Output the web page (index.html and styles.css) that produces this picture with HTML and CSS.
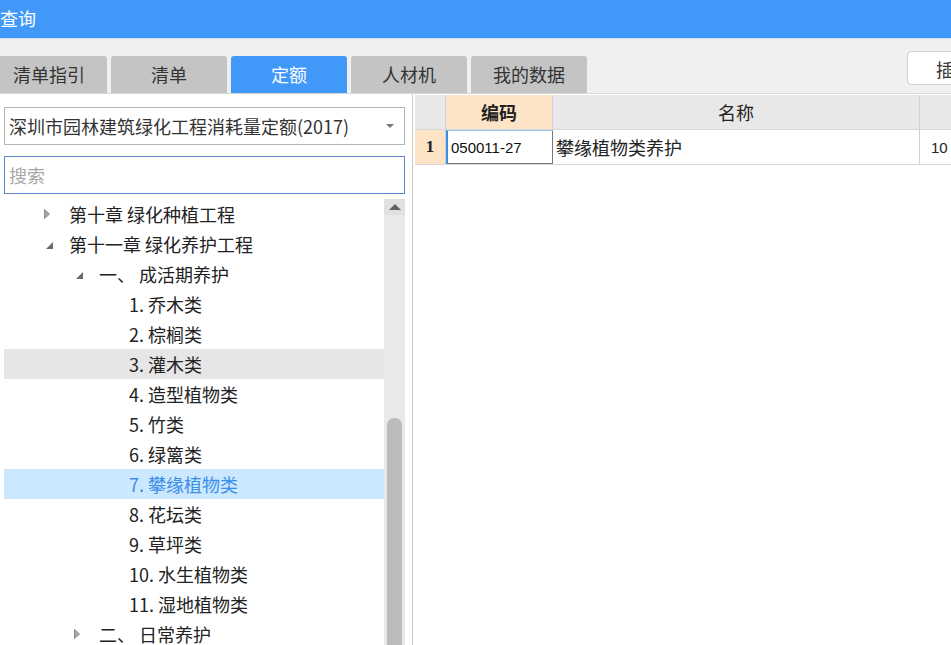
FILE: index.html
```html
<!DOCTYPE HTML>
<html>

<head>
    <meta charset="UTF-8">
    <link rel="stylesheet" href="styles.css">
</head>

<body>
    <div class="titlebar">查询</div>

    <div class="toolbar">
        <div class="tabs">
            <div class="tab first">清单指引</div>
            <div class="tab">清单</div>
            <div class="tab active">定额</div>
            <div class="tab">人材机</div>
            <div class="tab">我的数据</div>
        </div>
        <div class="tool-btn">插入</div>
    </div>

    <div class="main">
        <div class="left">
            <div class="select">
                <span>深圳市园林建筑绿化工程消耗量定额(2017)</span>
                <svg class="caret" width="8" height="5" viewBox="0 0 8 5"><polygon points="0,0 8,0 4,4" fill="#777"/></svg>
            </div>
            <div class="search">搜索</div>

            <div class="tree">
                <ul class="rows">
                    <li class="row lv0"><span class="exp"><svg width="6" height="10" viewBox="0 0 6 10"><polygon points="0.5,0.5 5.5,5 0.5,9.5" fill="#a6a6a6" stroke="#8c8c8c" stroke-width="1"/></svg></span>第十章 绿化种植工程</li>
                    <li class="row lv0"><span class="exp"><svg class="open" width="7" height="7" viewBox="0 0 7 7"><polygon points="7,0 7,7 0,7" fill="#6a6a6a"/></svg></span>第十一章 绿化养护工程</li>
                    <li class="row lv1"><span class="exp"><svg class="open" width="7" height="7" viewBox="0 0 7 7"><polygon points="7,0 7,7 0,7" fill="#6a6a6a"/></svg></span>一、 成活期养护</li>
                    <li class="row lv2"><span class="exp"></span>1. 乔木类</li>
                    <li class="row lv2"><span class="exp"></span>2. 棕榈类</li>
                    <li class="row lv2 hover"><span class="exp"></span>3. 灌木类</li>
                    <li class="row lv2"><span class="exp"></span>4. 造型植物类</li>
                    <li class="row lv2"><span class="exp"></span>5. 竹类</li>
                    <li class="row lv2"><span class="exp"></span>6. 绿篱类</li>
                    <li class="row lv2 selected"><span class="exp"></span>7. 攀缘植物类</li>
                    <li class="row lv2"><span class="exp"></span>8. 花坛类</li>
                    <li class="row lv2"><span class="exp"></span>9. 草坪类</li>
                    <li class="row lv2"><span class="exp"></span>10. 水生植物类</li>
                    <li class="row lv2"><span class="exp"></span>11. 湿地植物类</li>
                    <li class="row lv1"><span class="exp"><svg width="6" height="10" viewBox="0 0 6 10"><polygon points="0.5,0.5 5.5,5 0.5,9.5" fill="#a6a6a6" stroke="#8c8c8c" stroke-width="1"/></svg></span>二、 日常养护</li>
                </ul>
                <div class="scrollbar">
                    <div class="sb-up"><svg width="12" height="6" viewBox="0 0 12 6"><polygon points="0,6 6,0 12,6" fill="#606060"/></svg></div>
                    <div class="sb-thumb"></div>
                </div>
            </div>
        </div>

        <div class="grid">
            <div class="g-row g-head">
                <div class="cell rh"></div>
                <div class="cell code sorted">编码</div>
                <div class="cell name">名称</div>
                <div class="cell unit"></div>
            </div>
            <div class="g-row">
                <div class="cell rh num">1</div>
                <div class="cell code focus">050011-27</div>
                <div class="cell name left-text">攀缘植物类养护</div>
                <div class="cell unit left-text">10</div>
            </div>
        </div>
    </div>
</body>

</html>
```

FILE: styles.css
```css
body {
    margin: 0;
    width: 951px;
    height: 645px;
    overflow: hidden;
    background-color: #f0f0f0;
    font-family: "Noto Sans CJK SC", "Noto Sans", sans-serif;
    font-size: 18px;
    color: #222;
}

.titlebar {
    height: 38px;
    line-height: 36px;
    background-color: #4098f8;
    color: #fff;
    font-size: 18px;
    border-bottom: 1px solid #cfe2f8;
}

.toolbar {
    display: flex;
    justify-content: space-between;
    height: 54px;
    overflow: hidden;
}

.tabs {
    display: flex;
    gap: 4px;
    align-self: flex-end;
    margin-left: -9px;
}

.tab {
    width: 116px;
    height: 37px;
    line-height: 37px;
    text-align: center;
    background-color: #c4c4c4;
    color: #333;
    border-radius: 3px 3px 0 0;
}

.tab.active {
    background-color: #4098f8;
    color: #fff;
}

.tool-btn {
    width: 80px;
    height: 34px;
    line-height: 34px;
    margin-top: 12px;
    margin-right: -36px;
    padding-left: 28px;
    box-sizing: border-box;
    background-color: #fff;
    border: 1px solid #cfcfcf;
    border-radius: 4px;
    color: #333;
}

.main {
    display: flex;
    height: 552px;
    background-color: #fff;
    border-top: 1px solid #d8d8d8;
}

.left {
    width: 413px;
    padding: 13px 0 0 4px;
    box-sizing: border-box;
    border-right: 1px solid #c8c8c8;
    display: flex;
    flex-direction: column;
}

.select {
    width: 401px;
    height: 38px;
    box-sizing: border-box;
    border: 1px solid #b5b5b5;
    display: flex;
    align-items: center;
    justify-content: space-between;
    padding: 0 10px 0 4px;
    color: #333;
}

.search {
    width: 401px;
    height: 38px;
    margin-top: 11px;
    box-sizing: border-box;
    border: 1px solid #5a86c6;
    line-height: 36px;
    padding-left: 4px;
    color: #a8a8a8;
}

.tree {
    display: flex;
    margin-top: 5px;
    flex: 1;
    overflow: hidden;
}

.rows {
    list-style: none;
    margin: 0;
    padding: 0;
    width: 380px;
}

.row {
    display: flex;
    align-items: center;
    height: 30px;
    white-space: nowrap;
    color: #222;
}

.row.lv0 {
    padding-left: 36px;
}

.row.lv1 {
    padding-left: 66px;
}

.row.lv2 {
    padding-left: 96px;
}

.exp {
    width: 29px;
    flex-shrink: 0;
    display: flex;
    align-items: center;
}

.exp svg {
    margin-left: 4px;
}

.exp svg.open {
    margin-left: 6px;
    margin-top: 3px;
}

.row.hover {
    background-color: #e6e6e6;
}

.row.selected {
    background-color: #cce8ff;
    color: #3a8ee6;
}

.scrollbar {
    width: 21px;
    background-color: #e9e9e9;
    display: flex;
    flex-direction: column;
    align-items: center;
}

.sb-up {
    width: 21px;
    height: 16px;
    display: flex;
    align-items: center;
    justify-content: center;
    background-color: #e0e0e0;
}

.sb-thumb {
    width: 15px;
    margin-top: 203px;
    flex: 1;
    background-color: #bcbcbc;
    border-radius: 7px 7px 0 0;
}

.grid {
    flex: 1;
    padding: 1px 0 0 2px;
    overflow: hidden;
}

.g-row {
    display: flex;
    height: 34px;
    border-bottom: 1px solid #d8d8d8;
}

.cell {
    flex-shrink: 0;
    box-sizing: border-box;
    border-right: 1px solid #d0d0d0;
    display: flex;
    align-items: center;
    justify-content: center;
}

.g-head .cell {
    background-color: #e8e8e8;
}

.g-head .cell.sorted {
    background-color: #fde4c6;
    font-weight: bold;
}

.rh {
    width: 31px;
}

.code {
    width: 107px;
}

.name {
    width: 367px;
}

.unit {
    width: 60px;
}

.num {
    background-color: #fde4c6;
    font-family: "Liberation Serif", serif;
    font-weight: bold;
    font-size: 17px;
}

.focus {
    justify-content: flex-start;
    padding-left: 3px;
    border: 1px solid #7a7a7a;
    border-left: 2px solid #3a8ee6;
    border-top: 1px solid #9cc4f0;
    font-family: "Liberation Sans", sans-serif;
    font-size: 15px;
    color: #111;
}

.left-text {
    justify-content: flex-start;
    padding-left: 3px;
}

.unit.left-text {
    padding-left: 11px;
    font-family: "Liberation Sans", sans-serif;
    font-size: 15px;
}
```
